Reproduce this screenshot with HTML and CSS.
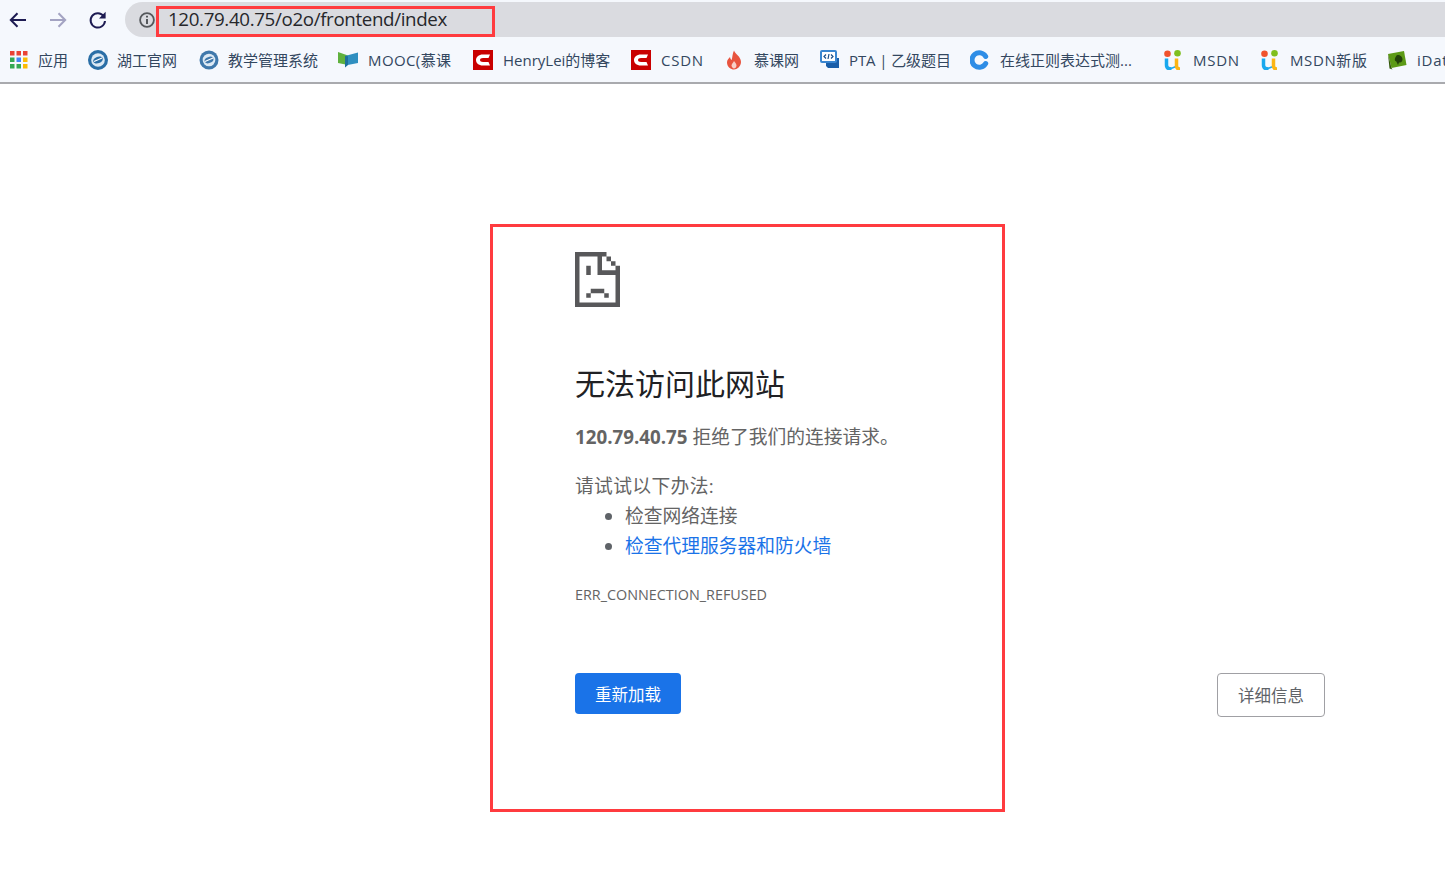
FILE: index.html
```html
<!DOCTYPE html>
<html lang="zh-CN">
<head>
<meta charset="utf-8">
<title>120.79.40.75</title>
<link rel="stylesheet" href="styles.css">
</head>
<body>
<header class="chrome">
  <div class="toolbar">
    <div class="nav">
      <svg class="nav-icon" viewBox="0 0 20 20"><path d="M18 10H3M9.5 3.200 2.800 10l6.700 6.800" fill="none" stroke="#1d1b52" stroke-width="2"/></svg>
      <svg class="nav-icon" viewBox="0 0 20 20"><path d="M2 10h15M10.500 3.200l6.700 6.800-6.700 6.800" fill="none" stroke="#a3a3c2" stroke-width="2"/></svg>
      <svg class="nav-icon" viewBox="0 0 20 20"><path d="M15.700 6.200A7.200 7.200 0 1 0 17 11" fill="none" stroke="#1d1b52" stroke-width="2"/><path d="M17.600 1.800v6.600H11z" fill="#1d1b52"/></svg>
    </div>
    <div class="omnibox">
      <svg class="info" viewBox="0 0 16 16"><circle cx="8" cy="8" r="6.900" fill="none" stroke="#55585c" stroke-width="1.800"/><path d="M7 7h2v5H7zM7 3.700h2v1.900H7z" fill="#55585c"/></svg>
      <span class="url">120.79.40.75/o2o/frontend/index</span>
    </div>
  </div>
  <nav class="bookmarks">
    <a class="bm bm-apps"><svg class="fav" viewBox="0 0 18 18"><path fill="#ea4335" d="M0 0h4.500v4.500H0zM6.500 0H11v4.500H6.500zM13 0h4.500v4.500H13z"/><path fill="#34a853" d="M0 6.500h4.500V11H0zM0 13h4.500v4.500H0z"/><path fill="#4285f4" d="M6.500 6.500H11V11H6.500z"/><path fill="#fbbc05" d="M13 13h4.500v4.500H13zM13 6.500h4.500V11H13z"/><path fill="#34a853" d="M6.500 13H11v4.500H6.500z"/></svg><span>应用</span></a>
    <a class="bm bm-hut"><svg class="fav" viewBox="0 0 20 20"><circle cx="10" cy="10" r="10" fill="#2a6ea6"/><circle cx="10" cy="10" r="6.800" fill="#dce9f4"/><ellipse cx="10" cy="10" rx="5" ry="3.300" fill="#2a6ea6" transform="rotate(-20 10 10)"/><path d="M6 11.500 14 8" stroke="#fff" stroke-width="1.300"/></svg><span>湖工官网</span></a>
    <a class="bm bm-edu"><svg class="fav" viewBox="0 0 20 20"><circle cx="10" cy="10" r="9.500" fill="#3f78ab"/><circle cx="10" cy="10" r="6.300" fill="#dce9f4"/><ellipse cx="10" cy="10" rx="4.600" ry="3" fill="#3f78ab" transform="rotate(-20 10 10)"/><path d="M6 11.500 14 8" stroke="#fff" stroke-width="1.200"/></svg><span>教学管理系统</span></a>
    <a class="bm bm-mooc"><svg class="fav" viewBox="0 0 20 20"><path d="M0 2l10 3.500V15L0 13z" fill="#5fb13d"/><path d="M7 6l13-3.500V13L7 15.500z" fill="#2f8fc0"/><path d="M7 6l3 .3V15l-3 2.500z" fill="#1e6f9c"/></svg><span>MOOC(慕课</span></a>
    <a class="bm bm-henry"><svg class="fav" viewBox="0 0 20 20"><path d="M0 0h20v20H0z" fill="#c90000"/><path d="M17 4.500H10C5.500 4.500 3 7 3 10s2.500 5.500 7 5.500h7L15.500 12H10c-2 0-3-.8-3-2s1-2 3-2h5.500z" fill="#fff"/></svg><span>HenryLei的博客</span></a>
    <a class="bm bm-csdn"><svg class="fav" viewBox="0 0 20 20"><path d="M0 0h20v20H0z" fill="#c90000"/><path d="M17 4.500H10C5.500 4.500 3 7 3 10s2.500 5.500 7 5.500h7L15.500 12H10c-2 0-3-.8-3-2s1-2 3-2h5.500z" fill="#fff"/></svg><span>CSDN</span></a>
    <a class="bm bm-imooc"><svg class="fav" viewBox="0 0 20 20"><path d="M10 .5c1 3.500 7 6 7 11.500 0 4.500-4 7.500-7 7.500S3 17 3 12.500c0-2.500 1.500-4 3-5.500.3 1.500.8 2.500 1.700 3C8.500 7 8.500 3.500 10 .5z" fill="#e8543f"/><path d="M10 11c.8 1.500 2.500 2.500 2.500 4.500S11 18.500 10 18.500s-2.500-1.500-2.500-3S9.300 12.500 10 11z" fill="#f8d0c8"/></svg><span>慕课网</span></a>
    <a class="bm bm-pta"><svg class="fav" viewBox="0 0 20 20"><path d="M6 8h13v10H8l-2-2z" fill="#1a5ea8"/><rect x="1" y="1" width="15" height="11" rx="1" fill="#fff" stroke="#3a86d0" stroke-width="2"/><path d="M6 4.500 4 6.500l2 2M11 4.500l2 2-2 2M9 4 8 9" fill="none" stroke="#1a4f8a" stroke-width="1.200"/></svg><span>PTA | 乙级题目</span></a>
    <a class="bm bm-regex"><svg class="fav" viewBox="0 0 20 20"><path d="M15.700 6.500a7.300 7.300 0 1 0 0 7" fill="none" stroke="#2e8de6" stroke-width="5" stroke-linecap="round"/></svg><span>在线正则表达式测...</span></a>
    <a class="bm bm-msdn"><svg class="fav" viewBox="0 0 20 20"><circle cx="4.500" cy="3.800" r="3.300" fill="#f0532d"/><circle cx="14.500" cy="3.300" r="3.300" fill="#7fbf1e"/><path d="M3.500 8.500V15c0 2.500 2 4 5 4" fill="none" stroke="#19a8ee" stroke-width="3.500"/><path d="M8 18.500l5-2" stroke="#19a8ee" stroke-width="1.500"/><path d="M13.500 8.500V16c0 2 1 3 3.500 3" fill="none" stroke="#fbb515" stroke-width="3.500"/></svg><span>MSDN</span></a>
    <a class="bm bm-msdn2"><svg class="fav" viewBox="0 0 20 20"><circle cx="4.500" cy="3.800" r="3.300" fill="#f0532d"/><circle cx="14.500" cy="3.300" r="3.300" fill="#7fbf1e"/><path d="M3.500 8.500V15c0 2.500 2 4 5 4" fill="none" stroke="#19a8ee" stroke-width="3.500"/><path d="M8 18.500l5-2" stroke="#19a8ee" stroke-width="1.500"/><path d="M13.500 8.500V16c0 2 1 3 3.500 3" fill="none" stroke="#fbb515" stroke-width="3.500"/></svg><span>MSDN新版</span></a>
    <a class="bm bm-idata"><svg class="fav" viewBox="0 0 20 20"><path d="M1 4l16-3 2.500 14-15 3z" fill="#5c9a16"/><path d="M1 4l3.500 14 1 1.500-3-1z" fill="#33590b"/><path d="M10.500 5c3 0 5 2 5 4.500s-2 3-3.500 3l-1 2.500-1.700-3.500C8 11 7.500 10 8 8.500S9.500 5 10.500 5z" fill="#23420a"/></svg><span>iData</span></a>
  </nav>
</header>

<main class="page">
  <section class="error">
    <svg class="sad" viewBox="0 0 10 12" preserveAspectRatio="none"><path fill="#58585a" d="M0 0h7v1h1v1h1v1h1v9H0zM1 1v10h8V5H5V1zM6 1v3h3V3H8V2H7V1zM2.500 3h1v2h-1zM3.500 8h3v1h1v1h-1V9h-3v1h-1V9h1z" fill-rule="evenodd"/></svg>
    <h1 class="title">无法访问此网站</h1>
    <p class="summary"><strong>120.79.40.75</strong> 拒绝了我们的连接请求。</p>
    <p class="try">请试试以下办法:</p>
    <ul class="tips">
      <li>检查网络连接</li>
      <li><a class="link">检查代理服务器和防火墙</a></li>
    </ul>
    <p class="code">ERR_CONNECTION_REFUSED</p>
  </section>
  <div class="actions">
    <button class="btn primary">重新加载</button>
    <button class="btn secondary">详细信息</button>
  </div>
</main>

<div class="mark mark-url"></div>
<div class="mark mark-body"></div>
</body>
</html>
```
FILE: styles.css
```css
* { box-sizing: border-box; }
html, body { margin: 0; height: 100%; }
body {
  background: #fff;
  font-family: "Open Sans", "Noto Sans CJK SC", sans-serif;
  overflow: hidden;
  position: relative;
}
.chrome {
  background: #f5f8fd;
  border-bottom: 2px solid #a9aaae;
  height: 84px;
}
.toolbar {
  display: flex;
  height: 37px;
  padding-top: 2px;
}
.nav {
  display: flex;
  align-items: center;
  width: 125px;
  padding-left: 8px;
  gap: 20px;
}
.nav-icon { width: 20px; height: 20px; flex: none; }
.omnibox {
  flex: 1;
  background: #dadbe0;
  border-radius: 18px 0 0 18px;
  display: flex;
  align-items: center;
  padding-left: 14px;
}
.info { width: 16px; height: 16px; flex: none; }
.url {
  margin: 0 0 2px 13px;
  font-size: 18.75px;
  letter-spacing: -0.36px;
  color: #26272b;
}
.bookmarks {
  display: flex;
  align-items: center;
  height: 45px;
  padding-left: 10px;
  white-space: nowrap;
  color: #33475f;
  font-size: 15px;
}
.bm { display: flex; align-items: center; flex: none; }
.bm span { margin-left: 10px; }
.fav { width: 20px; height: 20px; flex: none; }
.bm-apps { width: 78px; }
.bm-apps .fav { width: 18px; height: 18px; }
.bm-hut { width: 111px; }
.bm-hut span { margin-left: 9px; }
.bm-edu { width: 139px; }
.bm-edu span { margin-left: 9px; }
.bm-mooc { width: 135px; }
.bm-mooc span { letter-spacing: 0.4px; }
.bm-henry { width: 158px; }
.bm-csdn { width: 93px; }
.bm-csdn span { letter-spacing: 0.75px; }
.bm-imooc { width: 96px; }
.bm-pta { width: 150px; }
.bm-pta span { margin-left: 9px; letter-spacing: -0.1px; }
.bm-regex { width: 193px; }
.bm-msdn { width: 97px; }
.bm-msdn span { letter-spacing: 0.75px; }
.bm-msdn2 { width: 127px; }
.bm-msdn2 span { letter-spacing: 0.6px; }
.bm-idata span { letter-spacing: 0.75px; }
.page {
  padding: 168px 120px 0 575px;
}
.sad { display: block; width: 45px; height: 55px; }
.title {
  margin: 58px 0 0;
  font-size: 30px;
  font-weight: 400;
  line-height: 38px;
  color: #202124;
}
.summary, .try, .tips {
  font-size: 18.75px;
  line-height: 30px;
  color: #646464;
}
.summary { margin: 19px 0 0; }
.try { margin: 19px 0 0; letter-spacing: 0.37px; }
.tips { margin: 0; padding-left: 50px; }
.tips li::marker { color: #5f6368; }
.link { color: #1a73e8; }
.code {
  margin: 19px 0 0;
  font-size: 14.37px;
  line-height: 30px;
  color: #646464;
}
.actions {
  display: flex;
  justify-content: space-between;
  align-items: flex-start;
  margin-top: 63px;
}
.btn {
  font: inherit;
  font-size: 16.5px;
  border-radius: 4px;
}
.primary {
  width: 106px;
  height: 41px;
  background: #1a73e8;
  color: #fff;
  border: 0;
}
.secondary {
  width: 108px;
  height: 44px;
  background: #fff;
  color: #5f6368;
  border: 1px solid #a0a0a4;
}
.mark {
  position: absolute;
  border: 3px solid #ff3b3f;
  pointer-events: none;
}
.mark-url { left: 156px; top: 6px; width: 339px; height: 31px; }
.mark-body { left: 490px; top: 224px; width: 515px; height: 588px; }
```
